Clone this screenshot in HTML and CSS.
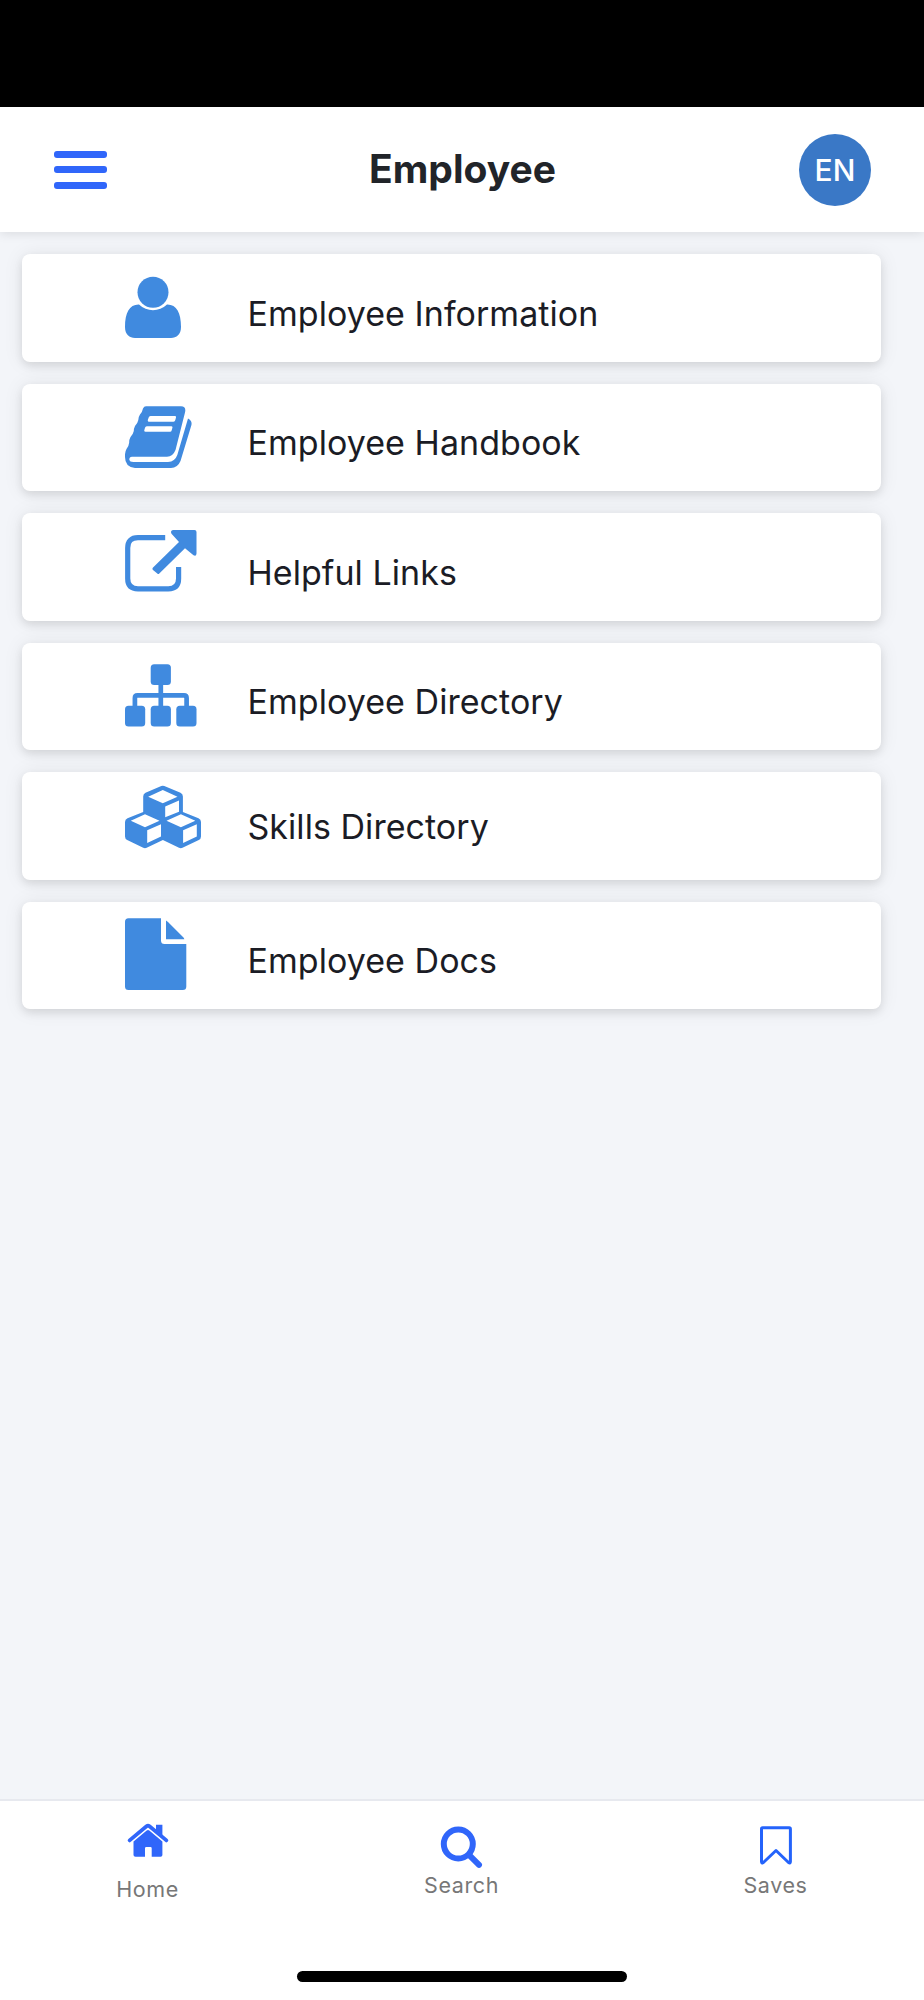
FILE: index.html
```html
<!DOCTYPE html>
<html lang="en">
<head>
<meta charset="utf-8">
<title>Employee</title>
<link rel="stylesheet" href="styles.css">
</head>
<body>
<div class="app">
  <div class="status-bar"></div>
  <header class="header">
    <button class="menu" aria-label="Menu"><span></span><span></span><span></span></button>
    <h1 class="title">Employee</h1>
    <div class="avatar">EN</div>
  </header>
  <main class="list">
    <a class="card">
      <svg class="icon" viewBox="0 0 80 107"><ellipse cx="28" cy="38.300" rx="15.500" ry="15.500"/><path d="M14 50.600C4.500 50.300 0 59 0 73C0 80.500 4.500 84 10 84H46C51.500 84 56 80.500 56 73C56 59 51.500 50.300 42 50.600C38 54.500 33 56.300 28 56.300S18 54.500 14 50.600Z"/></svg>
      <span class="label">Employee Information</span>
    </a>
    <a class="card">
      <svg class="icon" viewBox="0 0 80 107"><path fill-rule="evenodd" d="M21 22.300H56Q61.500 22.500 60 28.500L50.500 66Q48 72.500 42 72.700H7Q4.300 73 4.300 75.500Q4.600 78 8.500 78H43Q50 77.500 52.300 71L63 34.500Q67.600 37 66.300 41.500L55.500 77Q52.500 84 46 84H10Q0 83 0 73Q-.3 68 1.500 65Q4 61.500 4.200 58.500Q4 56 5.500 53Q8.200 50 8.800 47Q8.800 44.500 10 42Q12.800 39 13.300 36Q13.300 33 15 30.500Q17.500 27.500 18 24.500Q19 22.300 21 22.300ZM25.500 32Q24 32 23.700 33.500L22.800 36Q22.600 37.700 24 37.700H48.500Q50 37.700 50.300 36L51 33.500Q51.200 32 50 32ZM21.800 42.200Q20.400 42.200 20 43.700L19.300 46.200Q19 47.800 20.500 47.800H45Q46.400 47.800 46.700 46.200L47.400 43.700Q47.700 42.200 46.400 42.200Z"/></svg>
      <span class="label">Employee Handbook</span>
    </a>
    <a class="card">
      <svg class="icon" viewBox="0 0 80 107"><path class="outline" d="M40.200 24.700H13Q2.700 24.700 2.700 35V65.500Q2.700 75.800 13 75.800H43.300Q53.600 75.800 53.600 65.500V54"/><path d="M48 17H69.500Q71.500 17 71.500 19V40.500Q71.300 43.800 68.500 42.300L60 35.300L34.300 60.600Q33.300 61.600 32.300 60.600L28 57Q26.800 56 27.800 54.800L54 29L46.500 20.800Q45 17.700 48 17Z"/></svg>
      <span class="label">Helpful Links</span>
    </a>
    <a class="card">
      <svg class="icon" viewBox="0 0 80 107"><rect x="25.700" y="21.300" width="20.200" height="20.700" rx="3.500"/><rect y="62.700" width="20.200" height="20.700" rx="3.500"/><rect x="25.700" y="62.700" width="20.200" height="20.700" rx="3.500"/><rect x="51.300" y="62.700" width="20.200" height="20.700" rx="3.500"/><path class="wire" d="M35.800 40V65M9.900 65V55Q9.900 52.400 12.500 52.400H59Q61.600 52.400 61.600 55V65"/></svg>
      <span class="label">Employee Directory</span>
    </a>
    <a class="card">
      <svg class="icon" viewBox="0 0 80 107"><path fill-rule="evenodd" d="M36.300 14Q37.800 13.300 39.300 14L55.500 20.700Q57.900 21.800 57.900 24.500V40L73.500 46.300Q76 47.400 76 50V64.500Q76 66.900 73.800 68L57.500 75.800Q55.800 76.600 54 75.800L37.900 68L21.700 75.800Q20 76.600 18.200 75.800L2.200 68Q0 66.900 0 64.500V50Q0 47.400 2.500 46.300L18.200 40V24.500Q18.200 21.800 20.500 20.700ZM37.800 18L52.500 24.700L37.800 31.300L23.200 24.700ZM40.200 34.400L54 28.500V39.700L40.200 45.200ZM20 42.200L34.500 48.700L20 55.200L5.800 48.700ZM22.200 58.200L36 52.300V64.500L22.200 71ZM55.900 42.200L70.300 48.700L55.900 55.200L41.500 48.700ZM58.100 58.200L71.800 52.300V64.500L58.100 71Z"/></svg>
      <span class="label skills">Skills Directory</span>
    </a>
    <a class="card">
      <svg class="icon" viewBox="0 0 80 107"><path d="M3.500 16.300H36V38.500Q36 42 39.500 42H61.300V84.500Q61.300 88 57.800 88H3.500Q0 88 0 84.500V19.800Q0 16.300 3.500 16.300ZM41 18.500Q42 19 43 20L58 35Q59 36 59.400 37.300H41Z"/></svg>
      <span class="label">Employee Docs</span>
    </a>
  </main>
  <footer class="footer">
    <nav class="tabs">
      <a class="tab tab-home">
        <svg class="tab-icon" viewBox="0 0 48 48"><path d="M7.500 21.500L20.700 10.400Q22 9.500 23.300 10.400L36.400 21.500V35Q36.400 36.800 34.600 36.800H25.700V28.200Q25.700 27 24.500 27H20.300Q19 27 19 28.200V36.800H9.500Q7.500 36.800 7.500 35Z"/><path class="roof" d="M3.600 20.400L20.500 6.300Q22 5.200 23.500 6.300L40.400 20.400"/><path d="M30 4.700H36.400V18L30 12.500Z"/></svg>
        <span class="tab-label">Home</span>
      </a>
      <a class="tab">
        <svg class="tab-icon" viewBox="0 0 48 48"><circle class="lens" cx="20.300" cy="24" r="14.500"/><path class="handle" d="M31.500 35.400L41 44.800"/></svg>
        <span class="tab-label">Search</span>
      </a>
      <a class="tab">
        <svg class="tab-icon" viewBox="0 0 48 48"><path class="mark" d="M10.600 7.700H37.200Q38.400 7.700 38.400 8.900V41.500Q38.400 43.800 36.500 42.500L24 30.500L11.400 42.500Q9.500 43.800 9.500 41.500V8.900Q9.500 7.700 10.600 7.700Z"/></svg>
        <span class="tab-label">Saves</span>
      </a>
    </nav>
    <div class="home-indicator"></div>
  </footer>
</div>
</body>
</html>
```
FILE: styles.css
```css
* { box-sizing: border-box; }
body { margin: 0; font-family: Inter, "Liberation Sans", sans-serif; background: #f3f5f9; }
.app { width: 924px; height: 2000px; display: flex; flex-direction: column; background: #f3f5f9; overflow: hidden; }
.status-bar { height: 107px; flex: none; background: #000; }
.header { height: 125px; flex: none; display: grid; grid-template-columns: 72px 1fr 72px; align-items: center; padding: 0 53px 0 54px; background: #fff; box-shadow: 0 2px 10px rgba(0,0,0,.1); }
.menu { display: flex; flex-direction: column; gap: 8.500px; width: 53px; padding: 0; border: 0; background: none; }
.menu span { height: 7px; border-radius: 3px; background: #3066fa; }
.title { margin: 0 0 2px; text-align: center; font-size: 39px; font-weight: 700; line-height: 50px; color: #212429; }
.avatar { width: 72px; height: 72px; border-radius: 50%; background: #3a78c6; color: #fff; font-size: 30px; font-weight: 500; line-height: 72px; text-align: center; }
.list { flex: 1; display: flex; flex-direction: column; gap: 22px; padding: 22.400px 43px 0 22.400px; }
.card { flex: none; display: flex; align-items: flex-start; height: 107.500px; padding-left: 102.600px; border-radius: 8px; background: #fff; box-shadow: 0 4px 8px rgba(0,0,0,.09), 0 1px 20px rgba(0,0,0,.08); }
.icon { width: 80px; height: 107px; margin-right: 42.500px; flex: none; fill: #408adf; }
.outline { fill: none; stroke: #408adf; stroke-width: 5.200; }
.wire { fill: none; stroke: #408adf; stroke-width: 4.700; }
.label { padding-top: 34.300px; font-size: 34px; line-height: 50px; letter-spacing: .05px; color: #1b1c25; white-space: nowrap; }
.skills { padding-top: 30px; }
.footer { height: 201px; flex: none; display: flex; flex-direction: column; align-items: center; background: #fff; border-top: 2px solid #e7e9ef; }
.tabs { display: flex; justify-content: space-between; width: 100%; height: 170px; padding: 19px 98.500px 0 97.500px; }
.tab { display: flex; flex-direction: column; align-items: center; width: 100px; }
.tab-icon { width: 48px; height: 48px; fill: #3066fa; }
.tab-label { margin-top: 2px; font-size: 21.500px; line-height: 30px; letter-spacing: .6px; color: #777; }
.tab-home .tab-icon { margin-left: 4px; }
.tab-home .tab-label { margin-top: 6px; }
.roof { fill: none; stroke: #3066fa; stroke-width: 3.800; stroke-linecap: round; }
.lens { fill: none; stroke: #3066fa; stroke-width: 6; }
.handle { stroke: #3066fa; stroke-width: 6; stroke-linecap: round; }
.mark { fill: none; stroke: #2463fb; stroke-width: 3; stroke-linejoin: round; }
.home-indicator { width: 330px; height: 11px; border-radius: 6px; background: #000; }
```
